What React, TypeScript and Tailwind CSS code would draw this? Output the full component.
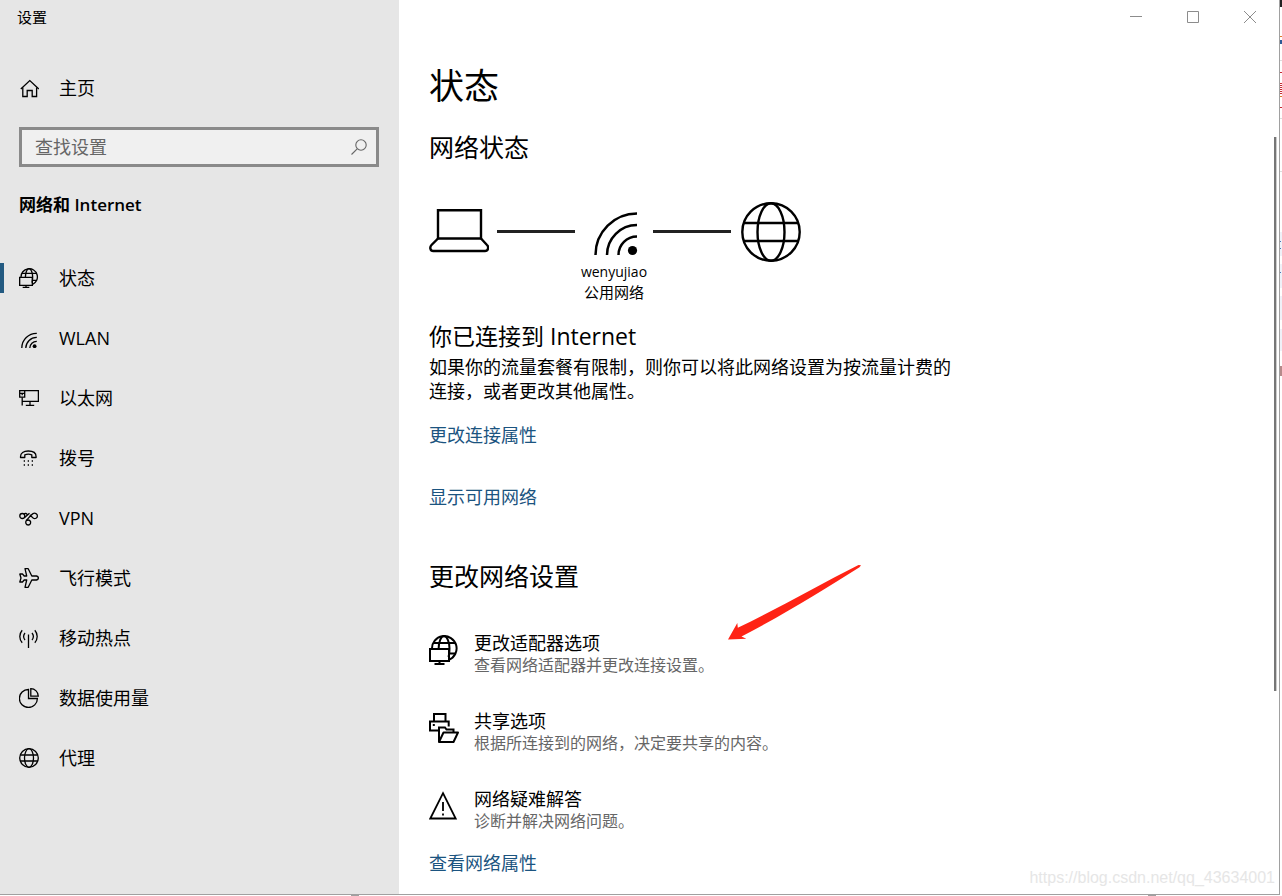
import React from 'react';

type IconProps = { className?: string };

const StatusIcon: React.FC<IconProps> = ({ className }) => (
  <svg className={className} viewBox="0 0 30 30" fill="none" stroke="currentColor" strokeWidth="2">
    <path d="M3 14A12.300 12.300 0 1 1 20 24.800" />
    <path d="M9.600 14C9.600 7 12 1 15 1s5.500 6 5.500 12.500c0 3.500-.2 6-1 8.500" />
    <path d="M4.500 8h21.500M20 18.500h6.500" />
    <path d="M1 14h19v12H1zM10.500 26v3.500M5.500 29h10" />
  </svg>
);

const HomeIcon: React.FC<IconProps> = ({ className }) => (
  <svg className={className} viewBox="0 0 20 20" fill="none" stroke="currentColor" strokeWidth="1.3">
    <path d="M1.800 11 10.800 2.600 19.800 11" />
    <path d="M3.800 9.500v9h4.400v-6h5v6h4.400v-9" />
  </svg>
);

const WifiIcon: React.FC<IconProps> = ({ className }) => (
  <svg className={className} viewBox="0 0 44 44" fill="none" stroke="currentColor" strokeWidth="2.500">
    <path d="M1.500 43A41.500 41.500 0 0 1 43 1.500" />
    <path d="M13 43A30 30 0 0 1 43 13" />
    <path d="M24.500 43A18.500 18.500 0 0 1 43 24.500" />
    <circle cx="38.500" cy="38.500" r="4.600" fill="currentColor" stroke="none" />
  </svg>
);

const SmallWifiIcon: React.FC<IconProps> = ({ className }) => (
  <svg className={className} viewBox="0 0 20 20" fill="none" stroke="currentColor" strokeWidth="1.3">
    <path d="M2.800 20A14.700 14.700 0 0 1 17.800 5.400" />
    <path d="M6.800 20A10.800 10.800 0 0 1 17.800 9.400" />
    <path d="M10.800 20a6.800 6.800 0 0 1 7-6.700" />
    <circle cx="15.600" cy="18.200" r="1.900" fill="currentColor" stroke="none" />
  </svg>
);

const EthernetIcon: React.FC<IconProps> = ({ className }) => (
  <svg className={className} viewBox="0 0 20 20" fill="none" stroke="currentColor" strokeWidth="1.3">
    <path d="M.7 2.700h5v6.500h-5zM.7 5.300h5M3.200 5.300v2" />
    <path d="M5.700 2.700h13.700v10.700H3.200M3.200 9.200v8.300" />
    <path d="M11 13.400v4M6.800 17.300h8.400" />
  </svg>
);

const DialIcon: React.FC<IconProps> = ({ className }) => (
  <svg className={className} viewBox="0 0 20 20" fill="none" stroke="currentColor" strokeWidth="1.3">
    <path d="M1.500 8.700C1.500 4.900 4.500 3 9.300 3s7.800 1.900 7.800 5.700v.8h-4.300V6.800c-2-.7-5-.7-7 0v2.700H1.500z" strokeLinejoin="round" />
    <path d="M4.700 13h1.300M8.700 13H10M12.700 13H14M4.700 17h1.300M8.700 17H10M12.700 17H14" />
  </svg>
);

const VpnIcon: React.FC<IconProps> = ({ className }) => (
  <svg className={className} viewBox="0 0 20 20" fill="none" stroke="currentColor" strokeWidth="1.3">
    <circle cx="3.300" cy="8" r="2.500" />
    <path d="M5 6.200c1.300-1.600 2.500-.8 3.500.7M5.300 9.800 10.500 5.300" />
    <path d="M7.200 12.600c-1 1.700-.3 4.400 2 4.400s3.200-2.700 1.800-4.200c-1.500-1.500-2.500-1-3.800-.2" />
    <path d="M7.200 12.600C9.500 10.500 11.500 7 14 5.600c2-1 4.500.2 4.400 2.400 0 2-2.300 3.200-4 2.200L10.800 7" />
  </svg>
);

const PlaneIcon: React.FC<IconProps> = ({ className }) => (
  <svg className={className} viewBox="0 0 20 20" fill="none" stroke="currentColor" strokeWidth="1.3">
    <path d="M17.500 8c2.500.7 2.500 3.300 0 4h-4.700L9.200 19.300H6L7.700 12H5.200l-1.700 2H.8L2 10 .8 6h2.700l1.700 2h2.500L6 .7h3.200L12.800 8z" strokeLinejoin="round" />
  </svg>
);

const HotspotIcon: React.FC<IconProps> = ({ className }) => (
  <svg className={className} viewBox="0 0 20 20" fill="none" stroke="currentColor" strokeWidth="1.3">
    <path d="M9.500 6.500V20" />
    <path d="M6 5c-1.600 2-1.600 5 0 7M13 5c1.600 2 1.600 5 0 7" />
    <path d="M3.200 2.300C0 6 0 11 3.200 14.700M15.800 2.300C19 6 19 11 15.800 14.700" />
  </svg>
);

const PieIcon: React.FC<IconProps> = ({ className }) => (
  <svg className={className} viewBox="0 0 20 20" fill="none" stroke="currentColor" strokeWidth="1.3">
    <path d="M9.500 1.500V10.500H18.400A9 9 0 1 1 9.500 1.500z" />
    <path d="M11.800.7v7.500h7.500A7.500 7.500 0 0 0 11.800.7z" />
  </svg>
);

const SmallGlobeIcon: React.FC<IconProps> = ({ className }) => (
  <svg className={className} viewBox="0 0 20 20" fill="none" stroke="currentColor" strokeWidth="1.3">
    <circle cx="10" cy="10" r="9.300" />
    <ellipse cx="10" cy="10" rx="4.500" ry="9.300" />
    <path d="M1.200 7h17.600M1.200 13h17.600" />
  </svg>
);

const GlobeIcon: React.FC<IconProps> = ({ className }) => (
  <svg className={className} viewBox="0 0 60 60" fill="none" stroke="currentColor" strokeWidth="2.400">
    <circle cx="30" cy="30" r="28.700" />
    <ellipse cx="30" cy="30" rx="13.500" ry="28.700" />
    <path d="M3 21h54M3 39h54" />
  </svg>
);

const LaptopIcon: React.FC<IconProps> = ({ className }) => (
  <svg className={className} viewBox="0 0 60 60" fill="none" stroke="currentColor" strokeWidth="2.400">
    <path d="M9 36.500V8.200h43v28.300z" />
    <path d="M9 36.500 2.500 43c-2 2-1.500 6 1.800 6H56c3.200 0 4-4 2-6l-6-6.500" />
  </svg>
);

const ShareIcon: React.FC<IconProps> = ({ className }) => (
  <svg className={className} viewBox="0 0 30 30" fill="none" stroke="currentColor" strokeWidth="2">
    <path d="M5 8.500V1h11.500v7.500M9.500 17.500H1v-9h18.700v5" />
    <path d="M3.800 12h2" />
    <path d="M10 29V14.500h6l1.500 2h7V19" />
    <path d="M14.500 19.500H29L24.500 29H10z" strokeLinejoin="round" />
  </svg>
);

const WarningIcon: React.FC<IconProps> = ({ className }) => (
  <svg className={className} viewBox="0 0 30 30" fill="none" stroke="currentColor" strokeWidth="1.800">
    <path d="M14 2.200 26.700 27.500H1.300z" />
    <path d="M14 11v9M14 22.500v2" />
  </svg>
);

const navItems = [
  { label: '状态', Icon: StatusIcon, active: true },
  { label: 'WLAN', Icon: SmallWifiIcon },
  { label: '以太网', Icon: EthernetIcon },
  { label: '拨号', Icon: DialIcon },
  { label: 'VPN', Icon: VpnIcon },
  { label: '飞行模式', Icon: PlaneIcon },
  { label: '移动热点', Icon: HotspotIcon },
  { label: '数据使用量', Icon: PieIcon },
  { label: '代理', Icon: SmallGlobeIcon },
];

const options = [
  { title: '更改适配器选项', text: '查看网络适配器并更改连接设置。', Icon: StatusIcon },
  { title: '共享选项', text: '根据所连接到的网络，决定要共享的内容。', Icon: ShareIcon },
  { title: '网络疑难解答', text: '诊断并解决网络问题。', Icon: WarningIcon },
];

const Sidebar: React.FC = () => (
  <aside className="w-[399px] shrink-0 bg-[#e6e6e6]">
    <div className="h-9 pl-[17px] text-[15px] leading-[34px]">设置</div>
    <a href="#home" className="mt-[22px] flex h-[60px] items-center gap-5 pl-[19px]">
      <HomeIcon className="h-5 w-5" />
      主页
    </a>
    <div className="mt-[9px] mr-5 ml-[19px] flex h-10 items-center border-3 border-[#8a8a8a] bg-[#f0f0f0] pr-2 pl-[13px]">
      <input
        type="text"
        aria-label="查找设置"
        placeholder="查找设置"
        className="min-w-0 flex-1 bg-transparent outline-none placeholder:text-[#666666]"
      />
      <svg className="h-[18px] w-[18px]" viewBox="0 0 18 18" fill="none" stroke="#666666" strokeWidth="1.1">
        <circle cx="11" cy="7" r="5.200" />
        <path d="M7.200 10.800 1.500 16.500" />
      </svg>
    </div>
    <h2 className="mt-4 pl-[19px] text-[17px] leading-[44px] font-semibold">网络和 Internet</h2>
    <nav className="mt-[21px]">
      {navItems.map(({ label, Icon, active }) => (
        <a key={label} href={`#${label}`} className="flex h-[60px] items-center">
          <span className={active ? 'h-[30px] w-1 bg-[#235a81]' : 'w-1'} />
          <Icon className="mr-5 ml-[15px] h-5 w-5" />
          {label}
        </a>
      ))}
    </nav>
  </aside>
);

const WindowControls: React.FC = () => (
  <div className="flex h-9 justify-end pr-px">
    <button aria-label="最小化" className="flex h-[34px] w-[57px] items-center justify-center">
      <svg className="h-3 w-3" viewBox="0 0 12 12" stroke="#8c8c8c"><path d="M0 5.500h12" /></svg>
    </button>
    <button aria-label="最大化" className="flex h-[34px] w-[57px] items-center justify-center">
      <svg className="h-3 w-3" viewBox="0 0 12 12" fill="none" stroke="#8c8c8c"><path d="M.5.5h11v11H.5z" /></svg>
    </button>
    <button aria-label="关闭" className="flex h-[34px] w-[57px] items-center justify-center">
      <svg className="h-3 w-3" viewBox="0 0 12 12" stroke="#8c8c8c"><path d="M0 0l12 12M12 0 0 12" /></svg>
    </button>
  </div>
);

const NetworkDiagram: React.FC = () => (
  <div className="mt-[37px] flex items-start">
    <LaptopIcon className="h-[60px] w-[60px]" />
    <div className="mt-7 ml-2 h-[3px] w-[78px] bg-[#222222]" />
    <div className="flex w-[78px] flex-col items-center">
      <div className="flex h-[60px] items-center pt-1 pl-1">
        <WifiIcon className="h-11 w-11" />
      </div>
      <span className="text-sm leading-5">wenyujiao</span>
      <span className="text-[15px] leading-5">公用网络</span>
    </div>
    <div className="mt-7 h-[3px] w-[78px] bg-[#222222]" />
    <GlobeIcon className="ml-[10px] h-[60px] w-[60px]" />
  </div>
);

const App: React.FC = () => (
  <div className="flex min-h-screen bg-white font-['Open_Sans','Noto_Sans_CJK_SC',sans-serif] text-[18px] leading-6 text-black">
    <div className="flex min-w-0 flex-1 flex-col">
      <div className="relative flex flex-1 border-r border-b border-[#a0a0a0]">
        <Sidebar />
        <main className="min-w-0 flex-1">
          <WindowControls />
          <div className="px-[30px] pb-[18px]">
            <h1 className="mt-7 text-[35px] leading-[44px]">状态</h1>
            <h2 className="mt-[21px] text-[25px] leading-9">网络状态</h2>
            <NetworkDiagram />

            <h3 className="mt-[18px] text-[23px] leading-8">你已连接到 Internet</h3>
            <p className="mt-[3px] max-w-[530px]">
              如果你的流量套餐有限制，则你可以将此网络设置为按流量计费的连接，或者更改其他属性。
            </p>
            <a href="#properties" className="mt-5 block w-fit text-[#1b5480]">更改连接属性</a>
            <a href="#available" className="mt-[38px] block w-fit text-[#1b5480]">显示可用网络</a>

            <section className="relative mt-[49px]">
              <h2 className="text-[25px] leading-9">更改网络设置</h2>
              {/* Red pointer over the adapter option */}
              <svg className="absolute top-[5px] left-[298px] h-[78px] w-[136px]" viewBox="0 0 136 78">
                <path d="M1 76.500 10.300 60l.5 4.700C50 46 92 22 131.500 2l2.500.3-1.500 2C96 27 60 50 14.500 73.500l4.800 2.200z" fill="#ff2315" />
              </svg>
              <div className="mt-[38px] flex flex-col gap-[34px]">
                {options.map(({ title, text, Icon }) => (
                  <a key={title} href={`#${title}`} className="flex w-fit gap-[15px]">
                    <Icon className="mt-[3px] h-[30px] w-[30px]" />
                    <span className="leading-[22px]">
                      <span className="block">{title}</span>
                      <span className="block text-base leading-[22px] text-[#666666]">{text}</span>
                    </span>
                  </a>
                ))}
              </div>
            </section>
            <a href="#network" className="mt-[19px] block w-fit text-[#1b5480]">查看网络属性</a>
          </div>
        </main>
        <div className="absolute top-[137px] right-[2px] h-[62%] w-[3px] border-r border-[#cccccc] bg-[#767676]" />
        <span className="absolute right-1 bottom-1 font-['Liberation_Sans',sans-serif] text-base text-[#e6e6e6]">
          https://blog.csdn.net/qq_43634001
        </span>
      </div>
      <div className="flex h-px justify-between pr-[124px] pl-[351px]">
        <span className="w-2 bg-[#a0a0a0]" />
        <span className="w-2 bg-[#a0a0a0]" />
      </div>
    </div>
    {/* Sliver of the window behind */}
    <svg className="h-[400px] w-[2px] shrink-0" viewBox="0 0 2 400">
      <path d="M0 0h2v7H0z" fill="#222222" />
      <path d="M0 36h2v1H0zM0 96h2v1H0z" fill="#e07a28" />
      <path d="M0 40h2v4H0z" fill="#2d5a96" />
      <path d="M0 60h2v1H0zM0 118h2v1H0zM0 171h2v1H0z" fill="#dddddd" />
      <path d="M0 72h2v1H0zM0 83h2v1H0zM0 85h2v1H0zM0 87h2v1H0zM0 89h2v1H0zM0 91h2v1H0zM0 93h2v1H0zM0 107h2v1H0z" fill="#c42a32" />
      <path d="M0 232h2v24H0zM0 264h2v24H0zM0 296h2v24H0zM0 329h2v22H0z" fill="#eff1f8" />
      <path d="M0 241h1v1H0zM0 248h1v1H0zM0 272h1v1H0z" fill="#4a78b8" />
      <path d="M0 366h2v10H0z" fill="#b58a8a" />
    </svg>
  </div>
);

export default App;
